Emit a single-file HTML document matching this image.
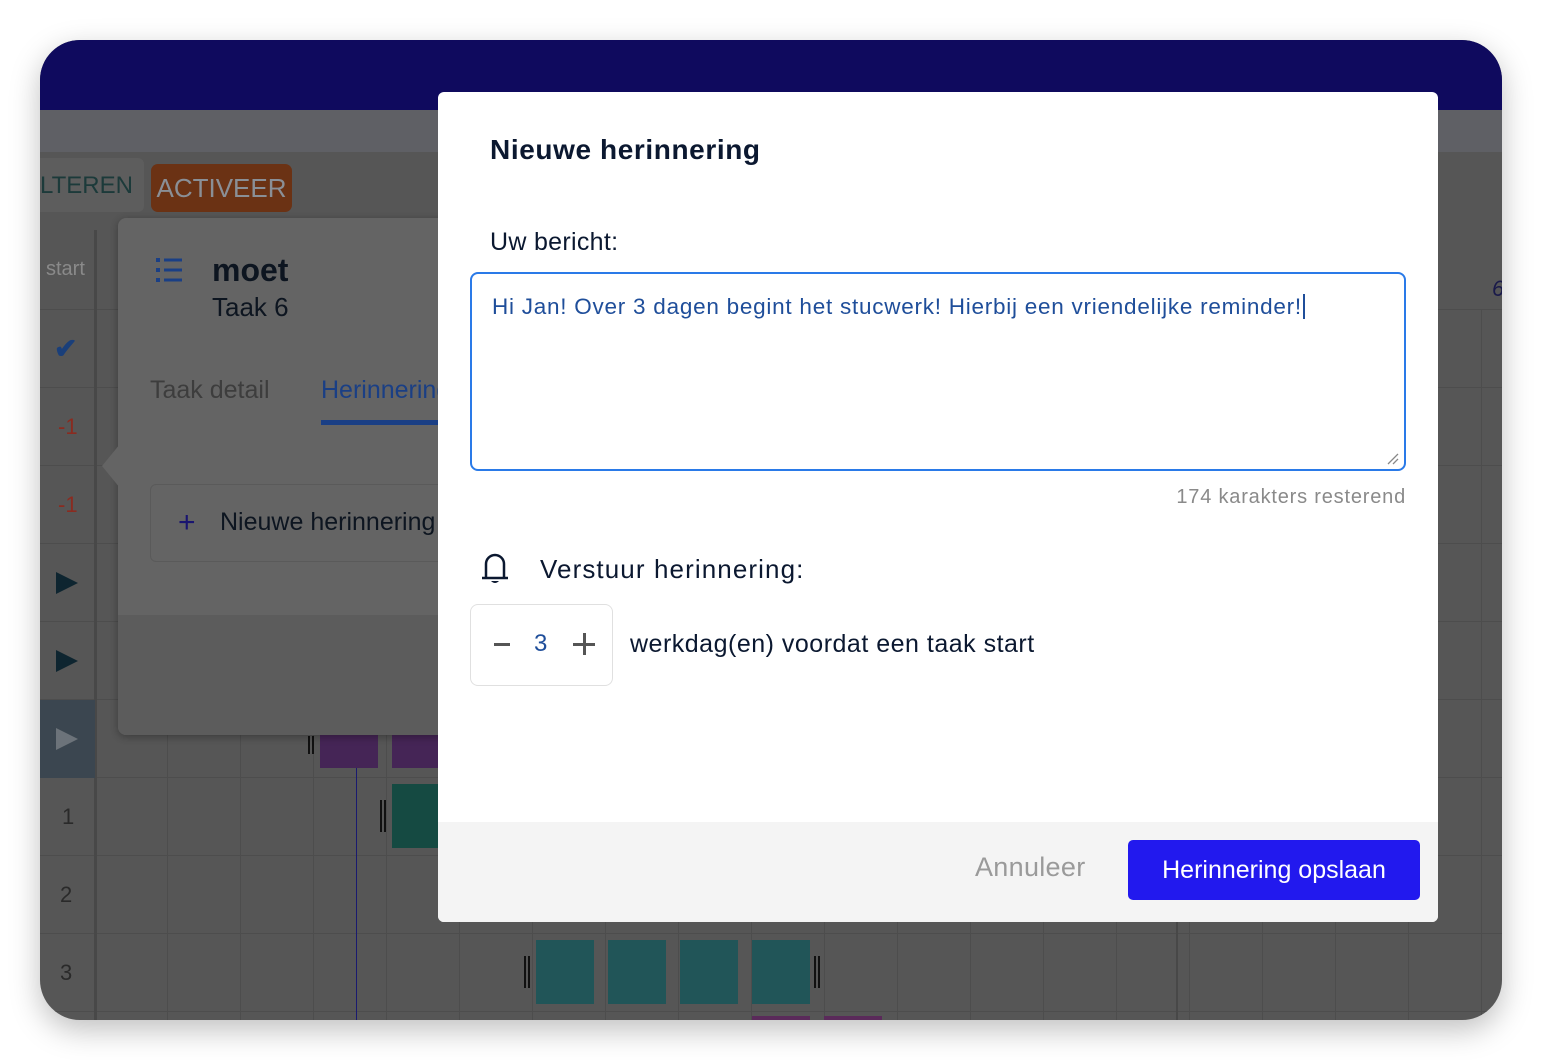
<!DOCTYPE html>
<html><head><meta charset="utf-8"><style>
*{margin:0;padding:0;box-sizing:border-box}
body{width:1542px;height:1060px;background:#fff;font-family:"Liberation Sans",sans-serif;position:relative;overflow:hidden}
.card{position:absolute;left:40px;top:40px;width:1462px;height:980px;border-radius:40px;overflow:hidden;background:#565656;box-shadow:0 10px 30px rgba(0,0,0,.25)}
.a{position:absolute}
</style></head><body>
<div class="card">
 <div class="a" style="left:0;top:0;width:1462px;height:70px;background:#0f0a5e"></div>
 <div class="a" style="left:0;top:70px;width:1462px;height:42px;background:#5f6065"></div>
 <div class="a" style="left:55px;top:270px;width:1407px;height:710px;background-image:repeating-linear-gradient(90deg,transparent 0 72px,#4d4d4d 72px 73px),repeating-linear-gradient(180deg,transparent 0 77px,#4d4d4d 77px 78px)"></div>
 <div class="a" style="left:0;top:270px;width:55px;height:710px;background-image:repeating-linear-gradient(180deg,transparent 0 77px,#4d4d4d 77px 78px)"></div>
 <div class="a" style="left:0;top:190px;width:1462px;height:80px;border-bottom:1px solid #4d4d4d"></div>
 <div class="a" style="left:54px;top:190px;width:3px;height:790px;background:#484848"></div>
 <div class="a" style="left:0;top:660px;width:55px;height:78px;background:#3b4650"></div>
 <div class="a" style="left:316px;top:270px;width:1px;height:710px;background:#1a1a70"></div>
 <div class="a" style="left:1136px;top:880px;width:2px;height:100px;background:#484848"></div>
 <div class="a" style="left:6px;top:218px;color:#8a8a8a;font-size:20px">start</div>
 <div class="a" style="left:14px;top:292px;color:#1a3f7a;font-size:28px;font-weight:bold">✔</div>
 <div class="a" style="left:18px;top:374px;color:#8a2b20;font-size:22px">-1</div>
 <div class="a" style="left:18px;top:452px;color:#8a2b20;font-size:22px">-1</div>
 <div class="a" style="left:16px;top:532px;width:0;height:0;border-left:22px solid #0e2530;border-top:11px solid transparent;border-bottom:11px solid transparent"></div>
 <div class="a" style="left:16px;top:610px;width:0;height:0;border-left:22px solid #0e2530;border-top:11px solid transparent;border-bottom:11px solid transparent"></div>
 <div class="a" style="left:16px;top:688px;width:0;height:0;border-left:22px solid #6c737a;border-top:11px solid transparent;border-bottom:11px solid transparent"></div>
 <div class="a" style="left:22px;top:764px;color:#2a2a2a;font-size:22px">1</div>
 <div class="a" style="left:20px;top:842px;color:#2a2a2a;font-size:22px">2</div>
 <div class="a" style="left:20px;top:920px;color:#2a2a2a;font-size:22px">3</div>
 <div class="a" style="left:280px;top:690px;width:58px;height:38px;background:#452556"></div>
 <div class="a" style="left:352px;top:690px;width:58px;height:38px;background:#452556"></div>
 <div class="a" style="left:352px;top:744px;width:58px;height:64px;background:#154a42"></div>
 <div class="a" style="left:496px;top:900px;width:58px;height:64px;background:#215558"></div>
 <div class="a" style="left:568px;top:900px;width:58px;height:64px;background:#215558"></div>
 <div class="a" style="left:640px;top:900px;width:58px;height:64px;background:#215558"></div>
 <div class="a" style="left:712px;top:900px;width:58px;height:64px;background:#215558"></div>
 <div class="a" style="left:268px;top:696px;width:6px;height:18px;border-left:2px solid #111;border-right:2px solid #111"></div>
 <div class="a" style="left:340px;top:760px;width:6px;height:32px;border-left:2px solid #111;border-right:2px solid #111"></div>
 <div class="a" style="left:484px;top:916px;width:6px;height:32px;border-left:2px solid #111;border-right:2px solid #111"></div>
 <div class="a" style="left:774px;top:916px;width:6px;height:32px;border-left:2px solid #111;border-right:2px solid #111"></div>
 <div class="a" style="left:712px;top:976px;width:58px;height:6px;background:#5a2a5a"></div>
 <div class="a" style="left:784px;top:976px;width:58px;height:6px;background:#5a2a5a"></div>
 <div class="a" style="left:0;top:118px;width:104px;height:54px;background:#5d5d5d;border-radius:0 6px 6px 0"></div>
 <div class="a" style="left:0;top:132px;color:#1c3a3a;font-size:24px">LTEREN</div>
 <div class="a" style="left:111px;top:124px;width:141px;height:48px;background:#6b3214;border-radius:7px;color:#8a8f96;font-size:26px;text-align:center;line-height:48px">ACTIVEER</div>
 <div class="a" style="left:78px;top:178px;width:340px;height:517px;background:#646464;border-radius:8px;box-shadow:0 2px 8px rgba(0,0,0,.3)"></div>
 <div class="a" style="left:62px;top:404px;width:0;height:0;border-right:18px solid #646464;border-top:22px solid transparent;border-bottom:22px solid transparent"></div>
 <div class="a" style="left:78px;top:575px;width:360px;height:120px;background:#5c5c5c;border-radius:0 0 8px 8px"></div>
 <svg class="a" style="left:114px;top:216px" width="32" height="30"><g fill="#1a3f85"><rect x="2" y="2" width="4" height="4"/><rect x="2" y="12" width="4" height="4"/><rect x="2" y="22" width="4" height="4"/><rect x="10" y="2.5" width="18" height="3"/><rect x="10" y="12.5" width="18" height="3"/><rect x="10" y="22.5" width="18" height="3"/></g></svg>
 <div class="a" style="left:172px;top:212px;color:#0d1520;font-size:32px;font-weight:bold">moet</div>
 <div class="a" style="left:172px;top:252px;color:#0d1520;font-size:26px">Taak 6</div>
 <div class="a" style="left:110px;top:336px;color:#3d3d3d;font-size:25px">Taak detail</div>
 <div class="a" style="left:281px;top:336px;color:#1a3f85;font-size:25px;white-space:nowrap">Herinnering</div>
 <div class="a" style="left:281px;top:380px;width:140px;height:5px;background:#1a3f85"></div>
 <div class="a" style="left:110px;top:444px;width:330px;height:78px;border:1px solid #5a5a5a;border-radius:6px"></div>
 <div class="a" style="left:138px;top:466px;color:#1a1570;font-size:30px">+</div>
 <div class="a" style="left:180px;top:468px;color:#0d1520;font-size:25px;white-space:nowrap">Nieuwe herinnering</div>
 <div class="a" style="left:1452px;top:236px;color:#1a1a4a;font-size:22px;font-style:italic">6</div>
</div>
<div class="a" style="left:438px;top:92px;width:1000px;height:830px;background:#fff;border-radius:6px;overflow:hidden">
 <div class="a" style="left:52px;top:42px;color:#0b1830;font-size:28px;font-weight:bold;letter-spacing:0.6px">Nieuwe herinnering</div>
 <div class="a" style="left:52px;top:136px;color:#0b1830;font-size:25px;letter-spacing:0.3px">Uw bericht:</div>
 <div class="a" style="left:32px;top:180px;width:936px;height:199px;border:2px solid #2a7ae8;border-radius:8px"></div>
 <div class="a" style="left:54px;top:202px;color:#1f4e9a;font-size:22.5px;letter-spacing:0.75px;white-space:nowrap">Hi Jan! Over 3 dagen begint het stucwerk! Hierbij een vriendelijke reminder!<span style="border-left:2px solid #1f4e9a;margin-left:1px"></span></div>
 <svg class="a" style="left:948px;top:360px" width="14" height="14"><path d="M2 12L12 2M7 12L12 7" stroke="#888" stroke-width="1.3"/></svg>
 <div class="a" style="left:668px;top:394px;width:300px;text-align:right;color:#8a8a8a;font-size:20px;letter-spacing:0.8px;white-space:nowrap">174 karakters resterend</div>
 <svg class="a" style="left:38px;top:456px" width="38" height="38"><path d="M6 30 L32 30 M10 30 L10 16 A9 9 0 0 1 28 16 L28 30" fill="none" stroke="#0b1830" stroke-width="2.5" stroke-linejoin="round"/><path d="M15 33 Q19 37 23 33Z" fill="#0b1830"/></svg>
 <div class="a" style="left:102px;top:462px;color:#0b1830;font-size:26px;letter-spacing:1.1px">Verstuur herinnering:</div>
 <div class="a" style="left:32px;top:512px;width:143px;height:82px;border:1.5px solid #e0e0e0;border-radius:8px"></div>
 <div class="a" style="left:56px;top:551px;width:16px;height:2.5px;background:#555"></div>
 <div class="a" style="left:96px;top:538px;color:#1f4e9a;font-size:24px">3</div>
 <div class="a" style="left:135px;top:551px;width:22px;height:2.5px;background:#555"></div>
 <div class="a" style="left:145px;top:541px;width:2.5px;height:22px;background:#555"></div>
 <div class="a" style="left:192px;top:538px;color:#0b1830;font-size:25px;letter-spacing:0.5px;white-space:nowrap">werkdag(en) voordat een taak start</div>
 <div class="a" style="left:0;top:730px;width:1000px;height:100px;background:#f4f4f4"></div>
 <div class="a" style="left:537px;top:760px;color:#9a9a9a;font-size:27px;letter-spacing:0.3px">Annuleer</div>
 <div class="a" style="left:690px;top:748px;width:292px;height:60px;background:#2219ee;border-radius:5px;color:#fff;font-size:25px;text-align:center;line-height:60px">Herinnering opslaan</div>
</div>
</body></html>
